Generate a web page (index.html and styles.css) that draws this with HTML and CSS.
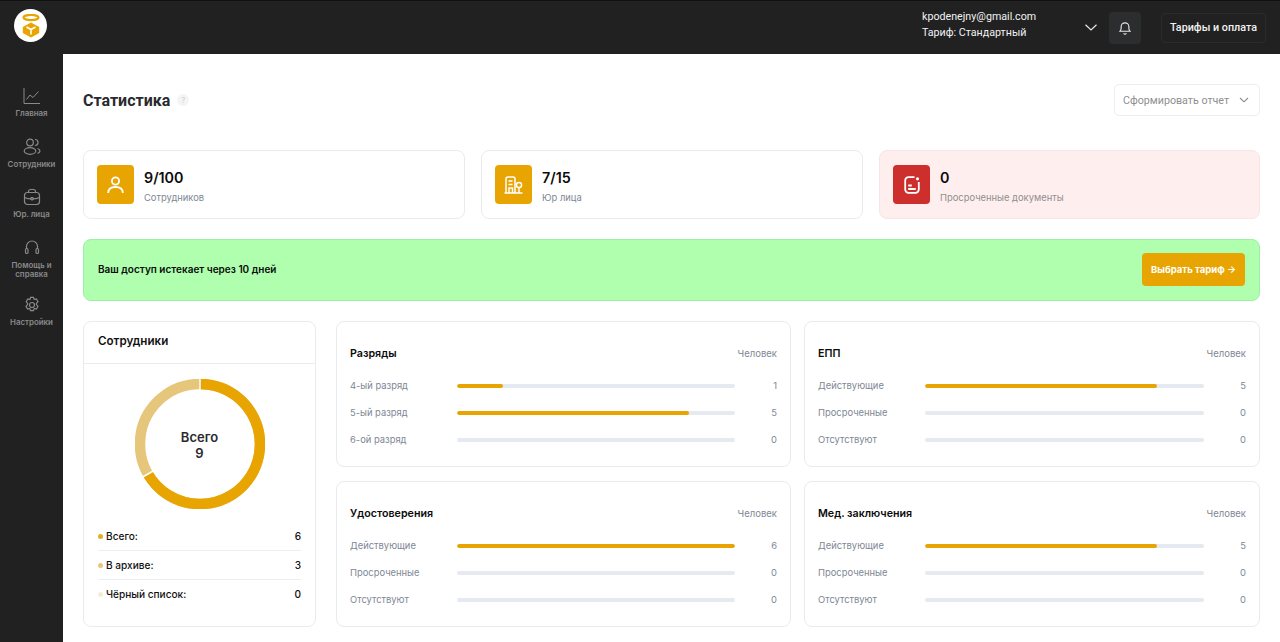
FILE: index.html
```html
<!DOCTYPE html>
<html lang="ru">

<head>
    <meta charset="UTF-8">
    <meta name="viewport" content="width=device-width, initial-scale=1.0">
    <title>Статистика</title>
    <link rel="stylesheet" href="styles.css">
</head>

<body>
    <header class="topbar">
        <div class="logo">
            <svg width="22" height="24" viewBox="0 0 22 24" fill="none">
                <ellipse cx="11" cy="3.5" rx="7.5" ry="2.6" stroke="#e8a400" stroke-width="2.2"/>
                <path d="M11 8.5l8.2 4.4v6.2L11 23.5l-8.2-4.4v-6.2z" fill="#e8a400"/>
                <path d="M11 15.5v5M11 15.5l-4.5-2.5M11 15.5l4.5-2.5" stroke="#fff" stroke-width="1.6"/>
            </svg>
        </div>
        <div class="user-info">
            <div>kpodenejny@gmail.com</div>
            <div>Тариф: Стандартный</div>
        </div>
        <svg class="user-arrow" width="12" height="7" viewBox="0 0 12 7" fill="none">
            <path d="M.5.8L6 6l5.5-5.2" stroke="#e8e8e8" stroke-width="1.2"/>
        </svg>
        <div class="bell">
            <svg width="12" height="14" viewBox="0 0 14 16" fill="none" stroke="#e8e8e8" stroke-width="1.3">
                <path d="M1.2 11.8c1-1 1.3-2 1.3-3.8V6.5a4.5 4.5 0 0 1 9 0V8c0 1.8.3 2.8 1.3 3.8z"/>
                <path d="M5.3 14.2c.8.8 2.6.8 3.4 0"/>
            </svg>
        </div>
        <div class="tariff-btn">Тарифы и оплата</div>
    </header>

    <div class="layout">
        <nav class="sidebar">
            <div class="nav-item">
                <svg width="18" height="18" viewBox="0 0 18 18" fill="none">
                    <path d="M1 1v15.5h16M3.5 12.5L7 8l3 2.5 5.5-6" stroke="#8a8a8a" stroke-width="1"/>
                </svg>
                <span>Главная</span>
            </div>
            <div class="nav-item">
                <svg width="18" height="18" viewBox="0 0 18 18" fill="none" stroke="#8a8a8a" stroke-width="1.2">
                    <circle cx="7" cy="4.5" r="3.3"/>
                    <ellipse cx="7" cy="13" rx="5.8" ry="3.3"/>
                    <path d="M12 1.5a3 3 0 0 1 0 6M14.5 10.5c1.5.4 2.5 1.3 2.5 2.5s-1 2-2.5 2.5"/>
                </svg>
                <span>Сотрудники</span>
            </div>
            <div class="nav-item">
                <svg width="18" height="18" viewBox="0 0 18 18" fill="none" stroke="#8a8a8a" stroke-width="1.2">
                    <rect x="1.5" y="4.5" width="15" height="12" rx="3"/>
                    <path d="M5.5 4.5v-1a2 2 0 0 1 2-2h3a2 2 0 0 1 2 2v1M1.5 9.5c4 2 11 2 15 0"/>
                    <rect x="7.8" y="9.5" width="2.4" height="2.4" rx=".8"/>
                </svg>
                <span>Юр. лица</span>
            </div>
            <div class="nav-item nav-item-tall">
                <svg width="18" height="18" viewBox="0 0 18 18" fill="none" stroke="#8a8a8a" stroke-width="1.2">
                    <path d="M3.5 10V7.5a5.5 5.5 0 0 1 11 0V10"/>
                    <rect x="2.5" y="9.5" width="2.5" height="5" rx="1.25"/>
                    <rect x="13" y="9.5" width="2.5" height="5" rx="1.25"/>
                </svg>
                <span>Помощь и справка</span>
            </div>
            <div class="nav-item">
                <svg width="18" height="18" viewBox="0 0 18 18" fill="none" stroke="#8a8a8a" stroke-width="1.2">
                    <path d="M7.5 1.4h3l.7 2.2 2.2-.6 1.600 2.700-1.600 1.700v1.200l1.600 1.700-1.600 2.700-2.200-.6-.7 2.200h-3l-.7-2.200-2.200.6-1.600-2.700 1.600-1.700V7.400L3.200 5.700 4.800 3l2.200.6z"/>
                    <circle cx="9" cy="9" r="2.5"/>
                </svg>
                <span>Настройки</span>
            </div>
        </nav>

        <main class="content">
            <div class="title-row">
                <div class="title-wrap">
                    <h1>Статистика</h1>
                    <span class="help">?</span>
                </div>
                <div class="report-select">
                    Сформировать отчет
                    <svg width="10" height="6" viewBox="0 0 10 6" fill="none">
                        <path d="M1 1l4 3.8L9 1" stroke="#8a8a8a" stroke-width="1.1"/>
                    </svg>
                </div>
            </div>

            <div class="stat-cards">
                <div class="stat-card">
                    <div class="stat-icon">
                        <svg width="17" height="18" viewBox="0 0 17 18" fill="none" stroke="#fff" stroke-width="1.8">
                            <circle cx="8.5" cy="5" r="3.6"/>
                            <path d="M1.2 17c0-3.8 2.8-6 7.300-6s7.300 2.200 7.300 6"/>
                        </svg>
                    </div>
                    <div>
                        <div class="stat-value">9/100</div>
                        <div class="stat-label">Сотрудников</div>
                    </div>
                </div>
                <div class="stat-card">
                    <div class="stat-icon">
                        <svg width="19" height="18" viewBox="0 0 19 18" fill="none" stroke="#fff" stroke-width="1.5">
                            <path d="M2 17V3a2 2 0 0 1 2-2h5a2 2 0 0 1 2 2v14M.5 17h18"/>
                            <path d="M4.5 5h4M4.5 8.5h4M5 17v-5h3.5v5"/>
                            <circle cx="15" cy="9" r="2.6"/>
                            <path d="M15 11.6V17"/>
                        </svg>
                    </div>
                    <div>
                        <div class="stat-value">7/15</div>
                        <div class="stat-label">Юр лица</div>
                    </div>
                </div>
                <div class="stat-card stat-card-danger">
                    <div class="stat-icon stat-icon-danger">
                        <svg width="16" height="18" viewBox="0 0 16 18" fill="none" stroke="#fff" stroke-width="1.8">
                            <path d="M10.5 1.2h-6a3.3 3.3 0 0 0-3.300 3.300v9a3.300 3.300 0 0 0 3.300 3.300h7a3.300 3.300 0 0 0 3.300-3.300V6"/>
                            <path d="M4.2 9.500h3.600M4.200 13h7.600"/>
                            <circle cx="13.5" cy="2.8" r="1.6" fill="#fff" stroke="none"/>
                        </svg>
                    </div>
                    <div>
                        <div class="stat-value">0</div>
                        <div class="stat-label">Просроченные документы</div>
                    </div>
                </div>
            </div>

            <div class="banner">
                <span>Ваш доступ истекает через 10 дней</span>
                <div class="banner-btn">Выбрать тариф →</div>
            </div>

            <div class="bottom-row">
                <section class="panel employees">
                    <h3 class="employees-title">Сотрудники</h3>
                    <div class="donut-wrap">
                        <svg width="130" height="130" viewBox="0 0 130 130" fill="none" stroke-width="10.5">
                            <circle cx="65" cy="65" r="60" stroke="#e6c67a"/>
                            <path d="M65 5a60 60 0 1 1-52 90" stroke="#e8a400"/>
                            <path d="M65 0v11M20 91L6 99" stroke="#fff" stroke-width="1.5"/>
                        </svg>
                        <div class="donut-text">Всего<br>9</div>
                    </div>
                    <div class="legend">
                        <div class="legend-row"><span class="legend-name"><i class="dot dot-1"></i>Всего:</span><span>6</span></div>
                        <div class="legend-row"><span class="legend-name"><i class="dot dot-2"></i>В архиве:</span><span>3</span></div>
                        <div class="legend-row"><span class="legend-name"><i class="dot dot-3"></i>Чёрный список:</span><span>0</span></div>
                    </div>
                </section>

                <div class="charts">
                    <section class="panel chart">
                        <div class="chart-head"><h3>Разряды</h3><span>Человек</span></div>
                        <div class="bar-row"><span>4-ый разряд</span><div class="bar"><div class="fill" style="width: 16.7%"></div></div><b>1</b></div>
                        <div class="bar-row"><span>5-ый разряд</span><div class="bar"><div class="fill" style="width: 83.3%"></div></div><b>5</b></div>
                        <div class="bar-row"><span>6-ой разряд</span><div class="bar"></div><b>0</b></div>
                    </section>

                    <section class="panel chart">
                        <div class="chart-head"><h3>ЕПП</h3><span>Человек</span></div>
                        <div class="bar-row"><span>Действующие</span><div class="bar"><div class="fill" style="width: 83.3%"></div></div><b>5</b></div>
                        <div class="bar-row"><span>Просроченные</span><div class="bar"></div><b>0</b></div>
                        <div class="bar-row"><span>Отсутствуют</span><div class="bar"></div><b>0</b></div>
                    </section>

                    <section class="panel chart">
                        <div class="chart-head"><h3>Удостоверения</h3><span>Человек</span></div>
                        <div class="bar-row"><span>Действующие</span><div class="bar"><div class="fill" style="width: 100%"></div></div><b>6</b></div>
                        <div class="bar-row"><span>Просроченные</span><div class="bar"></div><b>0</b></div>
                        <div class="bar-row"><span>Отсутствуют</span><div class="bar"></div><b>0</b></div>
                    </section>

                    <section class="panel chart">
                        <div class="chart-head"><h3>Мед. заключения</h3><span>Человек</span></div>
                        <div class="bar-row"><span>Действующие</span><div class="bar"><div class="fill" style="width: 83.3%"></div></div><b>5</b></div>
                        <div class="bar-row"><span>Просроченные</span><div class="bar"></div><b>0</b></div>
                        <div class="bar-row"><span>Отсутствуют</span><div class="bar"></div><b>0</b></div>
                    </section>
                </div>
            </div>
        </main>
    </div>
</body>

</html>
```

FILE: styles.css
```css
* {
    box-sizing: border-box;
}

html,
body {
    height: 100%;
}

body {
    margin: 0;
    font-family: 'Inter', sans-serif;
    background: #212121;
    color: #111;
    overflow: hidden;
}

h1,
h3 {
    margin: 0;
}

.topbar {
    height: 54px;
    display: flex;
    align-items: center;
    padding: 0 14px;
    background: #212121;
    border-top: 1px solid #111;
    color: #f2f2f2;
}

.logo {
    width: 33px;
    height: 33px;
    border-radius: 50%;
    background: #fff;
    display: flex;
    align-items: center;
    justify-content: center;
    margin-top: -4px;
}

.user-info {
    margin-left: auto;
    font-family: 'Roboto', sans-serif;
    font-size: 10.7px;
    line-height: 16px;
    width: 163px;
    margin-top: -6px;
}

.user-arrow {
    margin-right: 12px;
}

.bell {
    width: 32px;
    height: 32px;
    border-radius: 4px;
    background: #2c2d2f;
    display: flex;
    align-items: center;
    justify-content: center;
    margin-right: 20px;
}

.tariff-btn {
    width: 105px;
    height: 30px;
    border: 1px solid #2b2b2b;
    border-radius: 4px;
    font-family: 'Roboto', sans-serif;
    font-size: 10.75px;
    font-weight: 500;
    line-height: 28px;
    text-align: center;
}

.layout {
    display: flex;
    height: 588px;
}

.sidebar {
    width: 63px;
    flex-shrink: 0;
    padding-top: 33px;
    display: flex;
    flex-direction: column;
    align-items: center;
}

.nav-item {
    width: 56px;
    height: 50.5px;
    display: flex;
    flex-direction: column;
    align-items: center;
    text-align: center;
    color: #8a8a8a;
    font-size: 7.9px;
    font-weight: 600;
    line-height: 9px;
}

.nav-item-tall {
    height: 57px;
}

.nav-item svg {
    margin-bottom: 4px;
}

.content {
    flex: 1;
    background: #fff;
    padding: 30px 20px 0;
    min-width: 0;
}

.title-row {
    display: flex;
    justify-content: space-between;
    align-items: center;
    height: 32px;
    margin-bottom: 34px;
}

.title-wrap {
    display: flex;
    align-items: center;
    gap: 7px;
}

h1 {
    font-family: 'Roboto', sans-serif;
    font-size: 16px;
    font-weight: 700;
    color: #2a2a2e;
}

.help {
    width: 12px;
    height: 12px;
    border-radius: 50%;
    background: #f4f4f4;
    color: #d2d2d2;
    font-size: 8px;
    line-height: 12px;
    text-align: center;
}

.report-select {
    width: 146px;
    height: 32px;
    padding: 0 10px 0 8px;
    border: 1px solid #eceef1;
    border-radius: 5px;
    display: flex;
    align-items: center;
    justify-content: space-between;
    font-family: 'Roboto', sans-serif;
    font-size: 10.7px;
    color: #8f8f8f;
}

.stat-cards {
    display: grid;
    grid-template-columns: 382px 382px 1fr;
    gap: 16px;
    margin-bottom: 20px;
}

.stat-card {
    height: 69px;
    padding: 14px 13px;
    display: flex;
    gap: 10px;
    border: 1px solid #e9ebee;
    border-radius: 8px;
    background: #fff;
}

.stat-card-danger {
    background: #ffeeee;
    border-color: #f8e6e6;
}

.stat-icon {
    width: 37px;
    height: 39px;
    border-radius: 4px;
    background: #e8a400;
    display: flex;
    align-items: center;
    justify-content: center;
}

.stat-icon-danger {
    background: #cc2f2c;
}

.stat-value {
    margin-top: 1px;
    font-size: 14.3px;
    font-weight: 600;
    line-height: 24px;
    color: #0b0b0b;
}

.stat-label {
    margin-top: 1px;
    font-size: 9.4px;
    line-height: 14px;
    color: #7e8794;
}

.stat-card-danger .stat-label {
    color: #8f8f8f;
}

.banner {
    height: 62px;
    margin-bottom: 20px;
    padding: 0 14px 1px;
    display: flex;
    align-items: center;
    justify-content: space-between;
    background: #afffaf;
    border: 1px solid #9cefa8;
    border-radius: 8px;
    font-size: 10px;
    font-weight: 600;
    color: #0b0b0b;
}

.banner span {
    margin-bottom: 2px;
}

.banner-btn {
    width: 103px;
    height: 33px;
    border-radius: 4px;
    background: #e8a400;
    color: #fff;
    font-size: 9.5px;
    font-weight: 700;
    line-height: 33px;
    text-align: center;
}

.bottom-row {
    display: flex;
    gap: 20px;
}

.charts {
    flex: 1;
    display: grid;
    grid-template-columns: 455px 1fr;
    grid-template-rows: 146px 146px;
    column-gap: 13px;
    row-gap: 14px;
}

.panel {
    border: 1px solid #e9ebee;
    border-radius: 8px;
    background: #fff;
}

.employees {
    width: 233px;
    flex-shrink: 0;
}

.employees-title {
    height: 42px;
    padding: 0 14px;
    border-bottom: 1px solid #e9ebee;
    font-size: 11.6px;
    font-weight: 600;
    line-height: 39px;
}

.donut-wrap {
    position: relative;
    width: 130px;
    height: 130px;
    margin: 15px auto 13px;
}

.donut-wrap svg {
    display: block;
}

.donut-text {
    position: absolute;
    top: 50px;
    left: 0;
    right: 0;
    text-align: center;
    font-size: 13px;
    font-weight: 600;
    line-height: 16px;
    color: #2a2a2e;
}

.legend {
    margin: 0 14px;
    font-size: 10.1px;
    font-weight: 500;
}

.legend-row {
    height: 29px;
    display: flex;
    align-items: center;
    justify-content: space-between;
    border-bottom: 1px solid #eceef1;
    color: #111;
}

.legend-row:last-child {
    height: 28px;
    border-bottom: none;
}

.legend-name {
    display: flex;
    align-items: center;
    gap: 3px;
}

.dot {
    width: 5px;
    height: 5px;
    border-radius: 50%;
}

.dot-1 {
    background: #e0b020;
}

.dot-2 {
    background: #e8c877;
}

.dot-3 {
    background: #f5edd6;
}

.chart {
    padding: 0 13px;
}

.chart-head {
    height: 50px;
    padding-top: 12px;
    display: flex;
    align-items: center;
    justify-content: space-between;
}

.chart-head h3 {
    font-size: 10.7px;
    font-weight: 600;
    color: #0b0b0b;
}

.chart-head span {
    font-size: 9.5px;
    color: #7e8794;
}

.bar-row {
    height: 27px;
    display: flex;
    align-items: center;
    font-size: 9.4px;
    color: #7e8794;
}

.bar-row span {
    width: 107px;
    flex-shrink: 0;
}

.bar-row b {
    width: 42px;
    flex-shrink: 0;
    text-align: right;
    font-weight: 400;
}

.bar {
    flex: 1;
    height: 4px;
    border-radius: 2px;
    background: #e5eaf1;
    overflow: hidden;
}

.fill {
    height: 100%;
    border-radius: 2px;
    background: #e8a400;
}
```
